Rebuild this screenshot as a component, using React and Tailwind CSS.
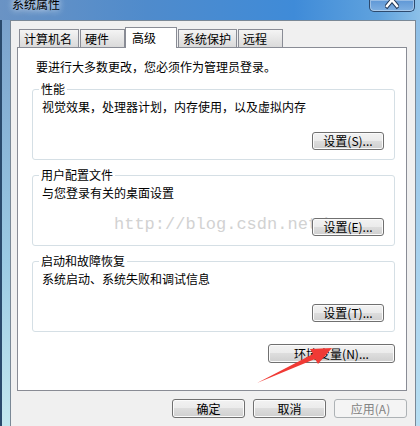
const font = "font-['Noto_Sans_CJK_SC','Noto_Sans_CJK_JP',sans-serif]";

const btnBase =
  "flex items-center justify-center rounded-[3px] border text-[12px] leading-[14px]";
const btnOn =
  "border-[#707070] text-black bg-[linear-gradient(180deg,#f2f2f2_0%,#ebebeb_50%,#dddddd_50%,#cfcfcf_100%)] shadow-[inset_0_0_0_1px_#fbfbfb]";
const btnOff = "border-[#adb2b5] text-[#838383] bg-[#f4f4f4]";

const Button = ({ children, className = "", disabled }) => (
  <div className={`${btnBase} ${disabled ? btnOff : btnOn} ${className}`}>{children}</div>
);

const tabs = [
  { label: "计算机名", cls: "ml-[2px] w-[60px]" },
  { label: "硬件", cls: "ml-[1px] w-[45px]" },
  { label: "高级", cls: "w-[52px]", active: true },
  { label: "系统保护", cls: "ml-[1px] w-[59px]" },
  { label: "远程", cls: "ml-[1px] w-[45px]" },
];

const Group = ({ title, text, button, watermark }) => (
  <fieldset className="ml-[14px] w-[363px] rounded-[3px] border border-[#d5dfe5] px-0">
    <legend className="ml-[6px] px-[2px] text-[12px] leading-[14px]">{title}</legend>
    <div className="relative flex flex-col pt-[4px] pb-[9px] pl-[9px] pr-[10px]">
      <div className="text-[12px] leading-[14px]">{text}</div>
      {watermark && (
        <div className="absolute left-[81px] top-[34px] font-['Liberation_Mono',monospace] text-[17px] leading-[18px] text-[#d2d2d2]">
          http://blog.csdn.net/
        </div>
      )}
      <div className="mt-[18px] flex justify-end">
        <Button className="relative h-[18px] w-[72px]">{button}</Button>
      </div>
    </div>
  </fieldset>
);

export default function App() {
  return (
    <div
      className={`${font} relative flex h-[426px] w-[420px] flex-col overflow-hidden bg-[linear-gradient(90deg,#6a93c4_0%,#4f8bcc_35%,#3f8bd8_70%,#5fa2de_90%,#8cc0e8_100%)] text-black`}
    >
      {/* title bar */}
      <div className="flex h-[20px] shrink-0 items-start justify-between pr-[5px]">
        <span className="-mt-[3px] ml-[12px] text-[12px] leading-[14px] [text-shadow:0_0_6px_rgba(255,255,255,0.9),0_0_10px_rgba(255,255,255,0.6)]">
          系统属性
        </span>
        <div className="relative flex h-[12px] w-[46px] justify-center overflow-hidden rounded-b-[5px] border border-t-0 border-[#2d4a6e] bg-[linear-gradient(180deg,#5e97d6,#7fb0e2)] shadow-[inset_0_0_0_1px_rgba(255,255,255,0.35)]">
          <svg width="14" height="12" viewBox="0 0 14 12">
            <path d="M2 -6 L12 6 M12 -6 L2 6" stroke="#243a58" strokeWidth="4.5" strokeLinecap="square" />
            <path d="M2 -6 L12 6 M12 -6 L2 6" stroke="#ffffff" strokeWidth="2.5" strokeLinecap="square" />
          </svg>
        </div>
      </div>

      {/* body */}
      <div className="flex flex-1">
        <div className="w-[10px] bg-[linear-gradient(180deg,#7aa2cc_0%,#9ccbe4_60%,#c4e8ef_100%)] shadow-[inset_2px_0_0_#2a4a6c]" />
        <div className="flex w-[406px] flex-col border border-b-0 border-[#7a8896] bg-[#f0f0f0] pl-[6px] pt-[6px]">
          {/* tabs */}
          <div className="flex h-[20px] items-end">
            {tabs.map((t) =>
              t.active ? (
                <div
                  key={t.label}
                  className={`relative z-10 -mb-px h-[21px] border border-b-0 border-[#898c95] bg-white pl-[6px] pt-[3px] text-[12px] leading-[14px] ${t.cls}`}
                >
                  {t.label}
                </div>
              ) : (
                <div
                  key={t.label}
                  className={`h-[18px] border border-b-0 border-[#898c95] bg-[linear-gradient(180deg,#f4f4f4,#dadada)] pl-[4px] pt-[2px] text-[12px] leading-[14px] ${t.cls}`}
                >
                  {t.label}
                </div>
              )
            )}
          </div>

          {/* panel */}
          <div className="flex h-[344px] w-[390px] flex-col border border-[#898c95] bg-white pt-[12px]">
            <div className="pl-[18px] text-[12px] leading-[14px]">要进行大多数更改，您必须作为管理员登录。</div>
            <div className="mt-[8px]">
              <Group title="性能" text="视觉效果，处理器计划，内存使用，以及虚拟内存" button="设置(S)..." />
            </div>
            <div className="mt-[8px]">
              <Group title="用户配置文件" text="与您登录有关的桌面设置" button="设置(E)..." watermark />
            </div>
            <div className="mt-[8px]">
              <Group title="启动和故障恢复" text="系统启动、系统失败和调试信息" button="设置(T)..." />
            </div>
            <div className="ml-[14px] mt-[12px] flex w-[363px] justify-end">
              <Button className="h-[19px] w-[127px]">环境变量(N)...</Button>
            </div>
          </div>

          {/* dialog buttons */}
          <div className="mt-[8px] flex w-[390px] justify-end gap-[8px]">
            <Button className="h-[19px] w-[73px]">确定</Button>
            <Button className="h-[19px] w-[73px]">取消</Button>
            <Button className="h-[19px] w-[73px]" disabled>
              应用(A)
            </Button>
          </div>
        </div>
        <div className="w-[4px] bg-[linear-gradient(180deg,#8fbfe6,#b8def2)]" />
      </div>

      {/* red arrow annotation */}
      <svg className="pointer-events-none absolute left-0 top-0" width="420" height="426" viewBox="0 0 420 426">
        <polygon
          points="257,383 313,354 310,349 332,348 318,364 315,359"
          fill="#f03a35"
        />
      </svg>
    </div>
  );
}
